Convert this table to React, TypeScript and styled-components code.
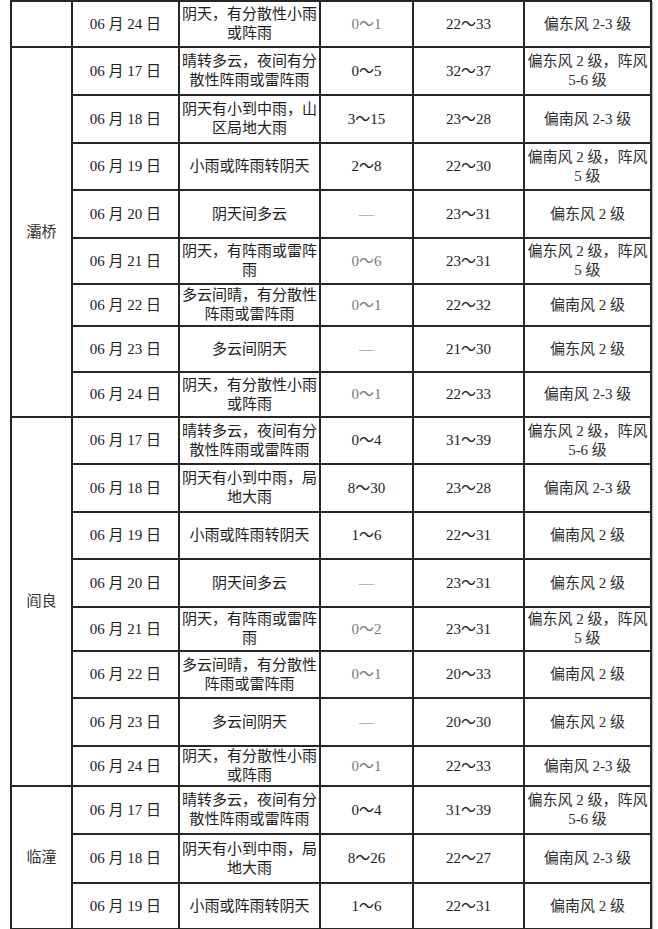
import React from 'react';
import styled, { createGlobalStyle } from 'styled-components';

interface DayForecast {
  date: string;
  weather: string[];
  rain: string;
  rainMuted?: boolean;
  temp: string;
  wind: string[];
  height: number;
}

interface RegionGroup {
  name: string;
  days: DayForecast[];
}

const GlobalStyle = createGlobalStyle`
  html, body {
    margin: 0;
    padding: 0;
    background: #fff;
  }
  body {
    font-family: "Liberation Serif", "Noto Sans CJK SC", serif;
    color: #1e1e1e;
  }
`;

const Page = styled.div`
  padding-left: 10px;
`;

const Table = styled.table`
  width: 640px;
  table-layout: fixed;
  border-collapse: collapse;
  box-shadow: 1px 1px 1px #b8b8b8;
`;

const Row = styled.tr<{ $h: number }>`
  height: ${p => p.$h}px;
`;

const Cell = styled.td`
  border: 2px solid #262626;
  padding: 0;
  text-align: center;
  vertical-align: middle;
  font-size: 15px;
  line-height: 19px;
  white-space: nowrap;
`;

const RegionCell = styled(Cell)`
  color: #333;
`;

const DateCell = styled(Cell)`
  color: #222;
`;

const RainCell = styled(Cell)<{ $muted?: boolean }>`
  color: ${p => (p.$muted ? '#7a7a7a' : '#1a1a1a')};
`;

const WindCell = styled(Cell)`
  color: #2e2e2e;
`;

const Line = styled.div`
  display: block;
`;

const carryOver: DayForecast = {
  date: '06 月 24 日',
  weather: ['阴天，有分散性小雨', '或阵雨'],
  rain: '0～1',
  rainMuted: true,
  temp: '22～33',
  wind: ['偏东风 2-3 级'],
  height: 46,
};

const groups: RegionGroup[] = [
  {
    name: '灞桥',
    days: [
      { date: '06 月 17 日', weather: ['晴转多云，夜间有分', '散性阵雨或雷阵雨'], rain: '0～5', temp: '32～37', wind: ['偏东风 2 级，阵风', '5-6 级'], height: 48 },
      { date: '06 月 18 日', weather: ['阴天有小到中雨，山', '区局地大雨'], rain: '3～15', temp: '23～28', wind: ['偏南风 2-3 级'], height: 48 },
      { date: '06 月 19 日', weather: ['小雨或阵雨转阴天'], rain: '2～8', temp: '22～30', wind: ['偏南风 2 级，阵风', '5 级'], height: 47 },
      { date: '06 月 20 日', weather: ['阴天间多云'], rain: '—', rainMuted: true, temp: '23～31', wind: ['偏东风 2 级'], height: 48 },
      { date: '06 月 21 日', weather: ['阴天，有阵雨或雷阵', '雨'], rain: '0～6', rainMuted: true, temp: '23～31', wind: ['偏东风 2 级，阵风', '5 级'], height: 46 },
      { date: '06 月 22 日', weather: ['多云间晴，有分散性', '阵雨或雷阵雨'], rain: '0～1', rainMuted: true, temp: '22～32', wind: ['偏南风 2 级'], height: 42 },
      { date: '06 月 23 日', weather: ['多云间阴天'], rain: '—', rainMuted: true, temp: '21～30', wind: ['偏东风 2 级'], height: 46 },
      { date: '06 月 24 日', weather: ['阴天，有分散性小雨', '或阵雨'], rain: '0～1', rainMuted: true, temp: '22～33', wind: ['偏南风 2-3 级'], height: 45 },
    ],
  },
  {
    name: '阎良',
    days: [
      { date: '06 月 17 日', weather: ['晴转多云，夜间有分', '散性阵雨或雷阵雨'], rain: '0～4', temp: '31～39', wind: ['偏东风 2 级，阵风', '5-6 级'], height: 47 },
      { date: '06 月 18 日', weather: ['阴天有小到中雨，局', '地大雨'], rain: '8～30', temp: '23～28', wind: ['偏南风 2-3 级'], height: 48 },
      { date: '06 月 19 日', weather: ['小雨或阵雨转阴天'], rain: '1～6', temp: '22～31', wind: ['偏南风 2 级'], height: 47 },
      { date: '06 月 20 日', weather: ['阴天间多云'], rain: '—', rainMuted: true, temp: '23～31', wind: ['偏东风 2 级'], height: 48 },
      { date: '06 月 21 日', weather: ['阴天，有阵雨或雷阵', '雨'], rain: '0～2', rainMuted: true, temp: '23～31', wind: ['偏东风 2 级，阵风', '5 级'], height: 44 },
      { date: '06 月 22 日', weather: ['多云间晴，有分散性', '阵雨或雷阵雨'], rain: '0～1', rainMuted: true, temp: '20～33', wind: ['偏南风 2 级'], height: 47 },
      { date: '06 月 23 日', weather: ['多云间阴天'], rain: '—', rainMuted: true, temp: '20～30', wind: ['偏东风 2 级'], height: 48 },
      { date: '06 月 24 日', weather: ['阴天，有分散性小雨', '或阵雨'], rain: '0～1', rainMuted: true, temp: '22～33', wind: ['偏南风 2-3 级'], height: 39 },
    ],
  },
  {
    name: '临潼',
    days: [
      { date: '06 月 17 日', weather: ['晴转多云，夜间有分', '散性阵雨或雷阵雨'], rain: '0～4', temp: '31～39', wind: ['偏东风 2 级，阵风', '5-6 级'], height: 48 },
      { date: '06 月 18 日', weather: ['阴天有小到中雨，局', '地大雨'], rain: '8～26', temp: '22～27', wind: ['偏南风 2-3 级'], height: 49 },
      { date: '06 月 19 日', weather: ['小雨或阵雨转阴天'], rain: '1～6', temp: '22～31', wind: ['偏南风 2 级'], height: 46 },
    ],
  },
];

const Lines: React.FC<{ items: string[] }> = ({ items }) => (
  <>
    {items.map((t, i) => (
      <Line key={i}>{t}</Line>
    ))}
  </>
);

const DayCells: React.FC<{ day: DayForecast }> = ({ day }) => (
  <>
    <DateCell>{day.date}</DateCell>
    <Cell>
      <Lines items={day.weather} />
    </Cell>
    <RainCell $muted={day.rainMuted}>{day.rain}</RainCell>
    <Cell>{day.temp}</Cell>
    <WindCell>
      <Lines items={day.wind} />
    </WindCell>
  </>
);

const App: React.FC = () => (
  <Page>
    <GlobalStyle />
    <Table>
      <colgroup>
        <col style={{ width: 61 }} />
        <col style={{ width: 107 }} />
        <col style={{ width: 141 }} />
        <col style={{ width: 93 }} />
        <col style={{ width: 111 }} />
        <col style={{ width: 127 }} />
      </colgroup>
      <tbody>
        <Row $h={carryOver.height}>
          <RegionCell />
          <DayCells day={carryOver} />
        </Row>
        {groups.map(g =>
          g.days.map((d, i) => (
            <Row key={g.name + d.date} $h={d.height}>
              {i === 0 && <RegionCell rowSpan={g.days.length}>{g.name}</RegionCell>}
              <DayCells day={d} />
            </Row>
          )),
        )}
      </tbody>
    </Table>
  </Page>
);

export default App;
